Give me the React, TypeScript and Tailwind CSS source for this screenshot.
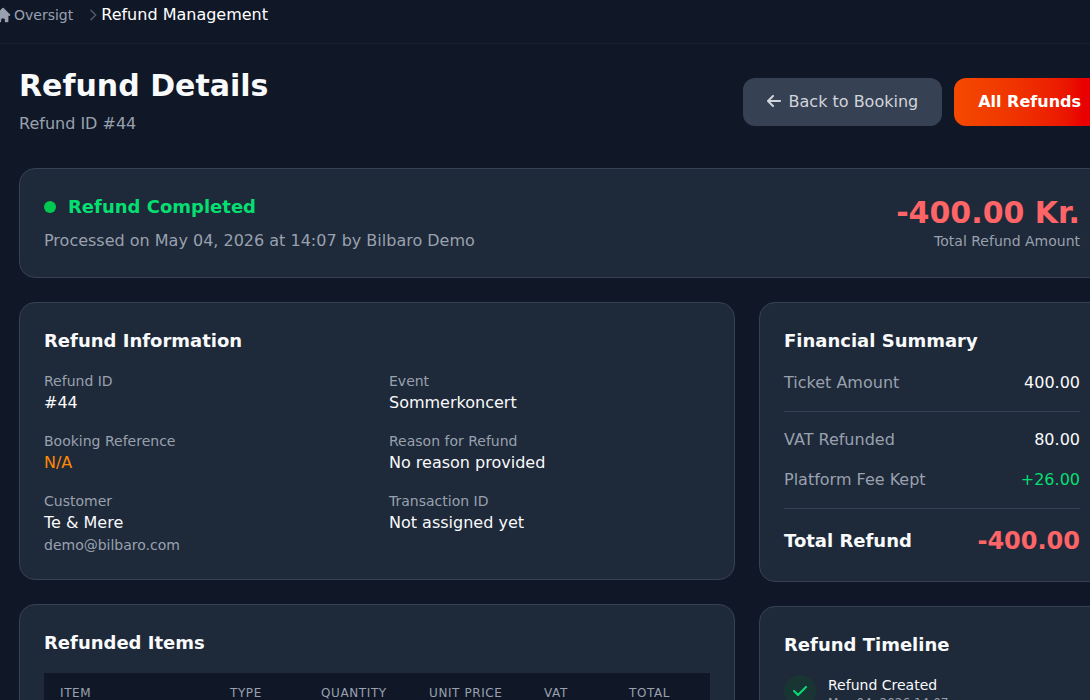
import type { ReactNode } from "react";

const details = [
  { label: "Refund ID", value: "#44" },
  { label: "Event", value: "Sommerkoncert" },
  { label: "Booking Reference", value: "N/A", accent: true },
  { label: "Reason for Refund", value: "No reason provided" },
  { label: "Customer", value: "Te & Mere", sub: "demo@bilbaro.com" },
  { label: "Transaction ID", value: "Not assigned yet" },
];

const columns = [
  { label: "Item", width: "w-[170px]" },
  { label: "Type", width: "w-[91px]" },
  { label: "Quantity", width: "w-[108px]" },
  { label: "Unit Price", width: "w-[115px]" },
  { label: "VAT", width: "w-[85px]" },
  { label: "Total", width: "w-[97px]" },
];

function Card({ title, children }: { title: string; children: ReactNode }) {
  return (
    <div className="bg-gray-800 border border-gray-700 rounded-2xl p-6">
      <h3 className="text-lg font-bold text-gray-50 mb-4">{title}</h3>
      {children}
    </div>
  );
}

function SummaryRow({ label, value, valueClass }: { label: string; value: string; valueClass: string }) {
  return (
    <div className="flex justify-between">
      <span className="text-gray-400">{label}</span>
      <span className={valueClass}>{value}</span>
    </div>
  );
}

function Breadcrumb() {
  return (
    <nav className="h-11 border-b border-gray-800/60 flex items-start">
      <div className="flex items-center h-[29px]">
        <svg className="-ml-1.5 w-[18px] h-[18px] mt-px shrink-0 text-gray-400" viewBox="0 0 20 20" fill="currentColor">
          <path d="M10.707 2.293a1 1 0 00-1.414 0l-7 7a1 1 0 001.414 1.414L4 10.414V17a1 1 0 001 1h2a1 1 0 001-1v-2a1 1 0 011-1h2a1 1 0 011 1v2a1 1 0 001 1h2a1 1 0 001-1v-6.586l.293.293a1 1 0 001.414-1.414l-7-7z" />
        </svg>
        <a className="ml-0.5 text-sm text-gray-400">Oversigt</a>
        <svg className="ml-3 w-4 h-4 text-gray-600" viewBox="0 0 24 24" fill="none" stroke="currentColor" strokeWidth={2.5} strokeLinecap="round" strokeLinejoin="round">
          <path d="M9 5l7 7-7 7" />
        </svg>
        <span className="text-base text-white">Refund Management</span>
      </div>
    </nav>
  );
}

export default function App() {
  return (
    <div className="h-[700px] w-full overflow-hidden bg-gray-900 font-['DejaVu_Sans',sans-serif]">
      <Breadcrumb />
      <main className="w-[1105px] pl-[19px] pt-6">
        <div className="flex items-center justify-between mb-8">
          <div>
            <h1 className="text-3xl font-bold text-gray-50 mb-2">Refund Details</h1>
            <p className="text-gray-400">Refund ID #44</p>
          </div>
          <div className="flex gap-3">
            <a className="flex items-center bg-gray-700 text-gray-300 px-6 py-3 rounded-xl whitespace-nowrap">
              <svg className="w-3.5 h-4 mr-2 mb-0.5" viewBox="0 0 448 512" fill="currentColor">
                <path d="M9.4 233.4c-12.5 12.5-12.5 32.8 0 45.3l160 160c12.5 12.5 32.8 12.5 45.3 0s12.5-32.8 0-45.3L109.2 288 416 288c17.7 0 32-14.3 32-32s-14.3-32-32-32l-306.7 0L214.6 118.6c12.5-12.5 12.5-32.8 0-45.3s-32.8-12.5-45.3 0l-160 160z" />
              </svg>
              Back to Booking
            </a>
            <a className="bg-gradient-to-r from-orange-600 to-red-600 text-white font-bold px-6 py-3 rounded-xl whitespace-nowrap">
              All Refunds
            </a>
          </div>
        </div>

        <div className="flex items-center justify-between bg-gray-800 border border-gray-700 rounded-2xl p-6 mb-6">
          <div>
            <div className="flex items-center gap-3 mb-2">
              <div className="w-3 h-3 rounded-full bg-green-500" />
              <span className="text-lg font-bold text-green-400">Refund Completed</span>
            </div>
            <p className="text-gray-400">Processed on May 04, 2026 at 14:07 by Bilbaro Demo</p>
          </div>
          <div className="text-right">
            <p className="text-3xl font-bold text-red-400">-400.00 Kr.</p>
            <p className="text-sm text-gray-400">Total Refund Amount</p>
          </div>
        </div>

        <div className="grid grid-cols-3 gap-6 items-start">
          <div className="col-span-2 space-y-6">
            <Card title="Refund Information">
              <div className="grid grid-cols-2 gap-x-6 gap-y-4">
                {details.map((item) => (
                  <div key={item.label}>
                    <p className="text-sm text-gray-400">{item.label}</p>
                    <p className={item.accent ? "text-orange-400" : "text-gray-50"}>{item.value}</p>
                    {item.sub ? <p className="text-sm text-gray-400">{item.sub}</p> : null}
                  </div>
                ))}
              </div>
            </Card>

            <Card title="Refunded Items">
              <table className="w-full table-fixed">
                <thead className="bg-gray-900">
                  <tr>
                    {columns.map((col) => (
                      <th
                        key={col.label}
                        className={`${col.width} px-4 py-3 text-left text-xs font-normal uppercase tracking-wider text-gray-400 whitespace-nowrap`}
                      >
                        {col.label}
                      </th>
                    ))}
                  </tr>
                </thead>
              </table>
            </Card>
          </div>

          <div className="space-y-6">
            <Card title="Financial Summary">
              <div className="space-y-4">
                <SummaryRow label="Ticket Amount" value="400.00" valueClass="text-gray-50" />
                <div className="border-t border-gray-700" />
                <SummaryRow label="VAT Refunded" value="80.00" valueClass="text-gray-50" />
                <SummaryRow label="Platform Fee Kept" value="+26.00" valueClass="text-green-400" />
                <div className="border-t border-gray-700" />
                <div className="flex items-center justify-between">
                  <span className="text-lg font-bold text-gray-50">Total Refund</span>
                  <span className="text-2xl font-bold text-red-400">-400.00</span>
                </div>
              </div>
            </Card>

            <Card title="Refund Timeline">
              <div className="flex items-start gap-3">
                <div className="w-8 h-8 rounded-full bg-green-900/30 flex items-center justify-center">
                  <svg className="w-3.5 h-4 text-green-400" viewBox="0 0 448 512" fill="currentColor">
                    <path d="M438.6 105.4c12.5 12.5 12.5 32.8 0 45.3l-256 256c-12.5 12.5-32.8 12.5-45.3 0l-128-128c-12.5-12.5-12.5-32.8 0-45.3s32.8-12.5 45.3 0L160 338.7 393.4 105.4c12.5-12.5 32.8-12.5 45.3 0z" />
                  </svg>
                </div>
                <div>
                  <p className="text-sm text-gray-50">Refund Created</p>
                  <p className="text-xs text-gray-400">May 04, 2026 14:07</p>
                </div>
              </div>
            </Card>
          </div>
        </div>
      </main>
    </div>
  );
}
